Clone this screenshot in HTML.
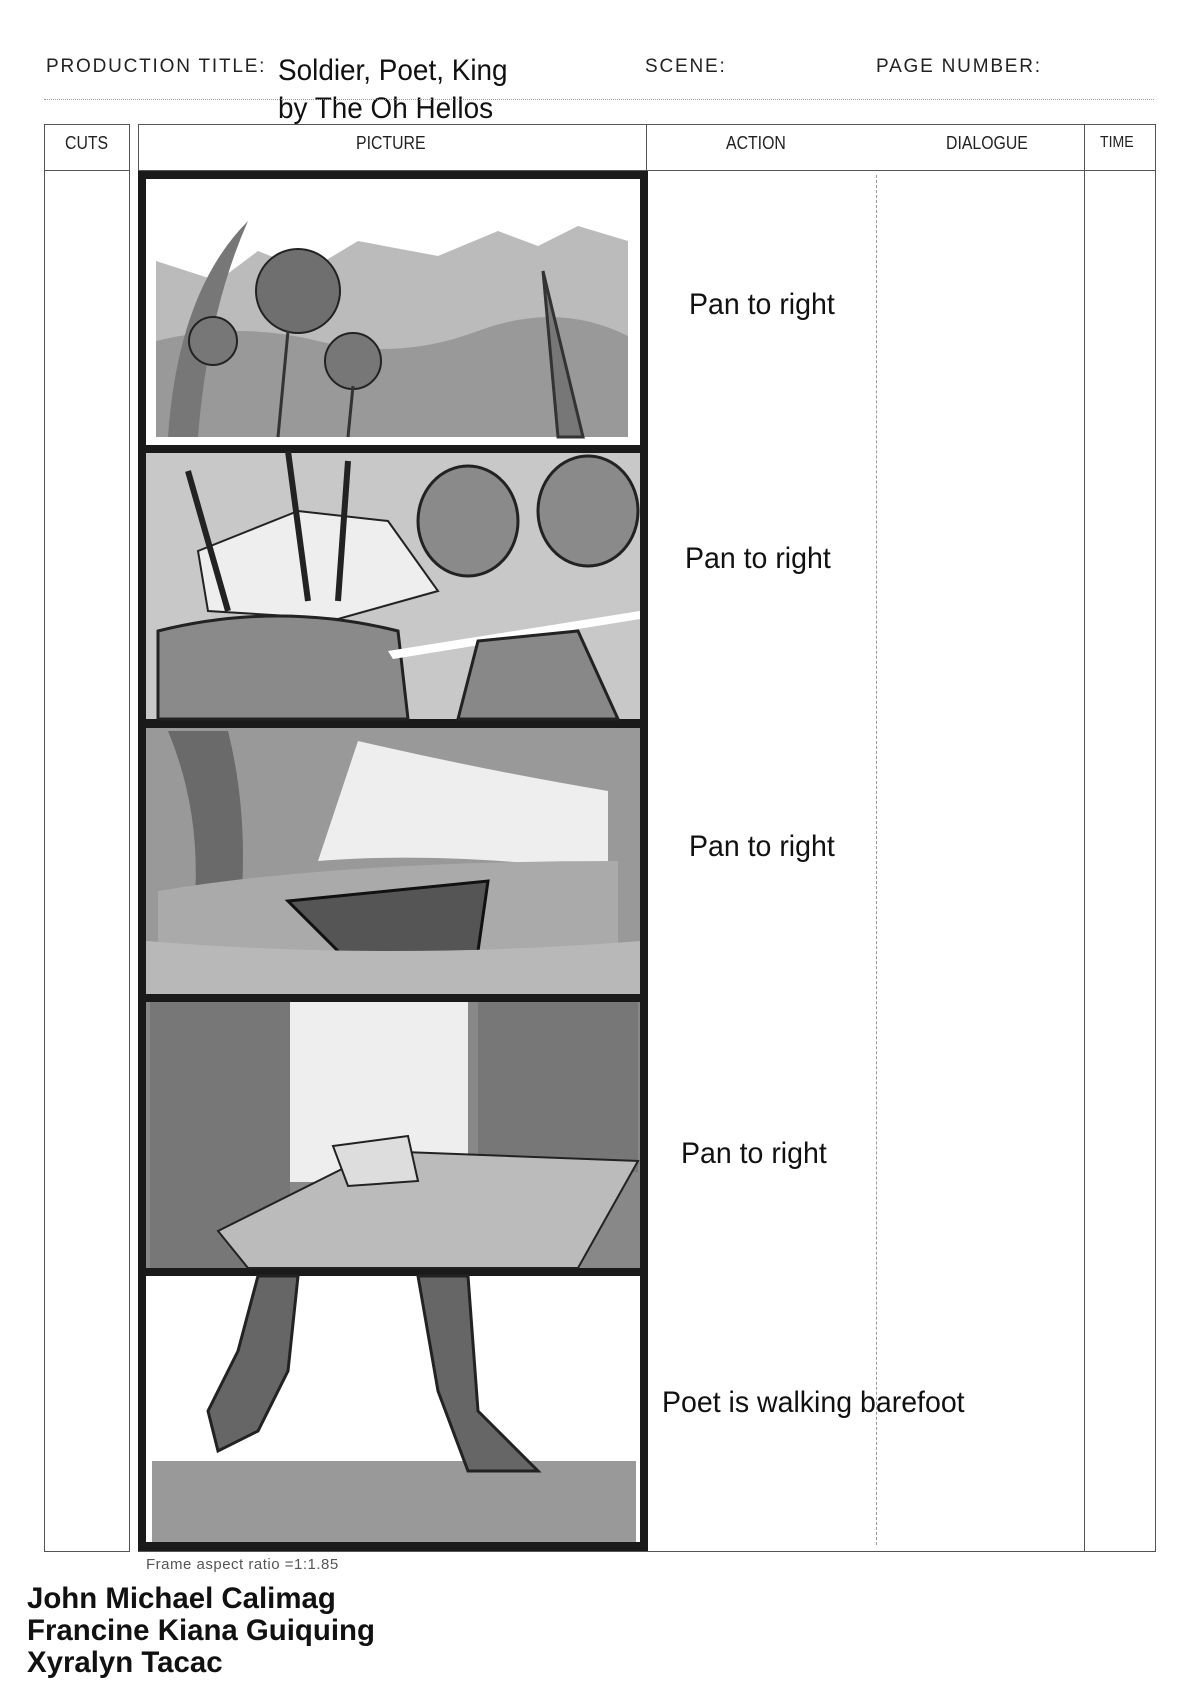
<!DOCTYPE html>
<html><head><meta charset="utf-8"><style>
body{margin:0;width:1200px;height:1697px;background:#fff;position:relative;overflow:hidden;font-family:"Liberation Sans",sans-serif}
.a{position:absolute}
.lbl{font-size:19px;letter-spacing:1.8px;color:#222}
.hd{font-size:18px;color:#222;transform:scaleX(.88);transform-origin:left}
.act{font-size:30px;color:#111;transform:scaleX(.95);transform-origin:left}
.nm{font-size:30px;font-weight:bold;color:#111;line-height:32px;transform:scaleX(.98);transform-origin:left}
</style></head><body>
<div class="a lbl" style="left:46px;top:56px">PRODUCTION TITLE:</div>
<div class="a" style="left:278px;top:52px;font-size:30px;line-height:38px;color:#111;transform:scaleX(.93);transform-origin:left">Soldier, Poet, King<br>by The Oh Hellos</div>
<div class="a lbl" style="left:645px;top:56px">SCENE:</div>
<div class="a lbl" style="left:876px;top:56px">PAGE NUMBER:</div>
<div class="a" style="left:44px;top:99px;width:1110px;border-top:1px dotted #999"></div>
<div class="a" style="left:44px;top:124px;width:84px;height:1426px;border:1px solid #555"></div>
<div class="a" style="left:44px;top:170px;width:85px;border-top:1px solid #555"></div>
<div class="a" style="left:138px;top:124px;width:1016px;height:1426px;border:1px solid #555"></div>
<div class="a" style="left:138px;top:170px;width:1017px;border-top:1px solid #555"></div>
<div class="a" style="left:646px;top:124px;height:1427px;border-left:1px solid #555"></div>
<div class="a" style="left:1084px;top:124px;height:1427px;border-left:1px solid #555"></div>
<div class="a" style="left:876px;top:175px;height:1370px;border-left:1px dashed #999"></div>
<div class="a hd" style="left:65px;top:133px">CUTS</div>
<div class="a hd" style="left:356px;top:133px">PICTURE</div>
<div class="a hd" style="left:726px;top:133px">ACTION</div>
<div class="a hd" style="left:946px;top:133px">DIALOGUE</div>
<div class="a hd" style="left:1100px;top:134px;font-size:16px">TIME</div>
<svg class="a" style="left:138px;top:171px" width="510" height="1380" viewBox="0 0 510 1380">
<rect x="0" y="0" width="510" height="1380" fill="#1a1a1a"/>
<rect x="8" y="8" width="494" height="266" fill="#fff"/>
<path d="M18 90 L80 110 120 80 170 100 220 70 300 85 360 60 400 75 440 55 490 70 490 266 18 266Z" fill="#bbb"/>
<path d="M18 170 Q100 150 180 170 T340 160 T490 165 L490 266 18 266Z" fill="#999"/>
<path d="M30 266 Q40 120 110 50 Q70 140 60 266Z" fill="#777"/>
<circle cx="160" cy="120" r="42" fill="#6f6f6f" stroke="#222" stroke-width="2"/>
<circle cx="75" cy="170" r="24" fill="#777" stroke="#222" stroke-width="2"/>
<circle cx="215" cy="190" r="28" fill="#777" stroke="#222" stroke-width="2"/>
<path d="M150 160 L140 266 M215 215 L210 266 M420 266 L405 100 L445 266Z" stroke="#333" stroke-width="3" fill="#777"/>
<rect x="8" y="282" width="494" height="266" fill="#c8c8c8"/>
<path d="M60 380 L160 340 L250 350 L300 420 L200 448 L70 440Z" fill="#eee" stroke="#222" stroke-width="2"/>
<path d="M20 460 Q140 430 260 460 L270 548 L20 548Z" fill="#8a8a8a" stroke="#222" stroke-width="3"/>
<ellipse cx="330" cy="350" rx="50" ry="55" fill="#8a8a8a" stroke="#222" stroke-width="3"/>
<ellipse cx="450" cy="340" rx="50" ry="55" fill="#8a8a8a" stroke="#222" stroke-width="3"/>
<path d="M250 480 L502 440 L502 448 L255 488Z" fill="#fff"/>
<path d="M320 548 L340 470 L440 460 L480 548Z" fill="#888" stroke="#222" stroke-width="3"/>
<path d="M50 300 L90 440 M150 280 L170 430 M210 290 L200 430" stroke="#222" stroke-width="6"/>
<rect x="8" y="557" width="494" height="266" fill="#999"/>
<path d="M30 560 Q80 680 40 823 L90 823 Q120 680 90 560Z" fill="#6a6a6a"/>
<path d="M220 570 Q350 600 470 620 L470 700 Q300 680 180 690Z" fill="#eee"/>
<path d="M20 720 Q200 690 480 690 L480 823 L20 823Z" fill="#aaa"/>
<path d="M150 730 L350 710 L340 780 L210 790Z" fill="#555" stroke="#111" stroke-width="3"/>
<path d="M8 770 Q250 790 502 770 L502 823 L8 823Z" fill="#b8b8b8"/>
<rect x="8" y="831" width="494" height="266" fill="#888"/>
<rect x="150" y="831" width="180" height="180" fill="#eee"/>
<rect x="12" y="831" width="140" height="266" fill="#777"/>
<rect x="340" y="831" width="160" height="170" fill="#777"/>
<path d="M80 1060 L240 980 L500 990 L440 1097 L110 1097Z" fill="#bbb" stroke="#222" stroke-width="2"/>
<path d="M195 975 L270 965 L280 1010 L210 1015Z" fill="#ddd" stroke="#222" stroke-width="2"/>
<rect x="8" y="1105" width="494" height="266" fill="#fff"/>
<rect x="14" y="1290" width="484" height="81" fill="#999"/>
<path d="M120 1105 L160 1105 L150 1200 L120 1260 L80 1280 L70 1240 L100 1180Z" fill="#666" stroke="#222" stroke-width="3"/>
<path d="M280 1105 L330 1105 L340 1240 L400 1300 L330 1300 L300 1220Z" fill="#666" stroke="#222" stroke-width="3"/>
</svg>
<div class="a act" style="left:689px;top:288px">Pan to right</div>
<div class="a act" style="left:685px;top:542px">Pan to right</div>
<div class="a act" style="left:689px;top:830px">Pan to right</div>
<div class="a act" style="left:681px;top:1137px">Pan to right</div>
<div class="a act" style="left:662px;top:1386px">Poet is walking barefoot</div>
<div class="a" style="left:146px;top:1556px;font-size:15px;color:#555;letter-spacing:.5px">Frame aspect ratio =1:1.85</div>
<div class="a nm" style="left:27px;top:1583px">John Michael Calimag<br>Francine Kiana Guiquing<br>Xyralyn Tacac</div>
</body></html>
